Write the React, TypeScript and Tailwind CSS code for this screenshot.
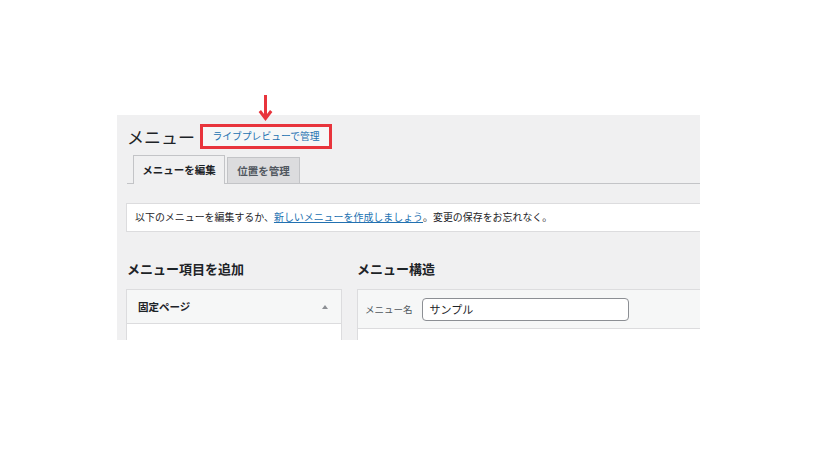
import React from "react";

const font = { fontFamily: '"Noto Sans CJK JP", "Noto Sans", sans-serif' };

export default function App() {
  return (
    <div className="relative w-[817px] h-[457px] bg-white overflow-hidden" style={font}>
      {/* annotation arrow */}
      <svg className="absolute left-[258px] top-[94px]" width="15" height="28" viewBox="0 0 15 28">
        <line x1="7.5" y1="1" x2="7.5" y2="23" stroke="#e8343c" strokeWidth="3" />
        <polyline points="1.8,17 7.5,24.5 13.2,17" fill="none" stroke="#e8343c" strokeWidth="3" strokeLinejoin="miter" />
      </svg>

      <div className="pt-[115px] pl-[117px]">
        <div className="w-[583px] h-[225px] bg-[#f0f0f1] overflow-hidden pl-[10px] pt-[9px] text-[#1d2327]">
          {/* header */}
          <div className="flex items-center h-[25px]">
            <h1 className="text-[17px] leading-[25px] font-normal">メニュー</h1>
            <div className="ml-[5px] h-[25px] w-[132px] border-[3px] border-[#e8343c] bg-[#f6f7f7] flex items-center justify-center">
              <span className="text-[9.8px] leading-none text-[#2271b1]">ライブプレビューで管理</span>
            </div>
          </div>

          {/* tabs */}
          <div className="mt-[6px] h-[29px] flex items-end pl-[6px] gap-[2px] border-b border-[#c3c4c7]">
            <div className="h-[29px] w-[92px] -mb-px bg-[#f0f0f1] border border-b-0 border-[#c3c4c7] flex items-center justify-center text-[10.5px] font-bold">
              メニューを編集
            </div>
            <div className="h-[26px] w-[73px] bg-[#dcdcde] border border-b-0 border-[#c3c4c7] flex items-center justify-center text-[10.5px] font-bold text-[#50575e]">
              位置を管理
            </div>
          </div>

          {/* notice */}
          <div className="mt-[19px] -ml-px h-[29px] w-[620px] bg-white border border-[#dcdcde] flex items-center pl-[8px] text-[9.95px] whitespace-nowrap">
            <span>以下のメニューを編集するか、</span>
            <span className="text-[#2271b1] underline">新しいメニューを作成しましょう</span>
            <span>。変更の保存をお忘れなく。</span>
          </div>

          {/* columns */}
          <div className="mt-[28px] flex gap-[15px]">
            <div className="w-[216px] shrink-0 -ml-px">
              <h2 className="h-[18px] leading-[18px] text-[13px] font-bold pl-px">メニュー項目を追加</h2>
              <div className="mt-[11px] border border-[#dcdcde] bg-white">
                <div className="h-[34px] bg-[#f6f7f7] border-b border-[#dcdcde] flex items-center justify-between pl-[11px] pr-[13px]">
                  <span className="text-[10.5px] font-bold">固定ページ</span>
                  <svg width="6" height="4" viewBox="0 0 6 4">
                    <polygon points="3,0 6,4 0,4" fill="#8c8f94" />
                  </svg>
                </div>
                <div className="h-[40px]" />
              </div>
            </div>
            <div className="w-[400px] shrink-0">
              <h2 className="h-[18px] leading-[18px] text-[13px] font-bold">メニュー構造</h2>
              <div className="mt-[11px] border border-[#dcdcde] bg-white">
                <div className="h-[39px] bg-[#f6f7f7] border-b border-[#dcdcde] flex items-center pl-[7px]">
                  <span className="text-[9.5px] text-[#50575e]">メニュー名</span>
                  <div className="ml-[9px] h-[23px] w-[207px] bg-white border border-[#8c8f94] rounded-[4px] flex items-center pl-[7px] text-[11px]">
                    サンプル
                  </div>
                </div>
                <div className="h-[40px]" />
              </div>
            </div>
          </div>
        </div>
      </div>
    </div>
  );
}
